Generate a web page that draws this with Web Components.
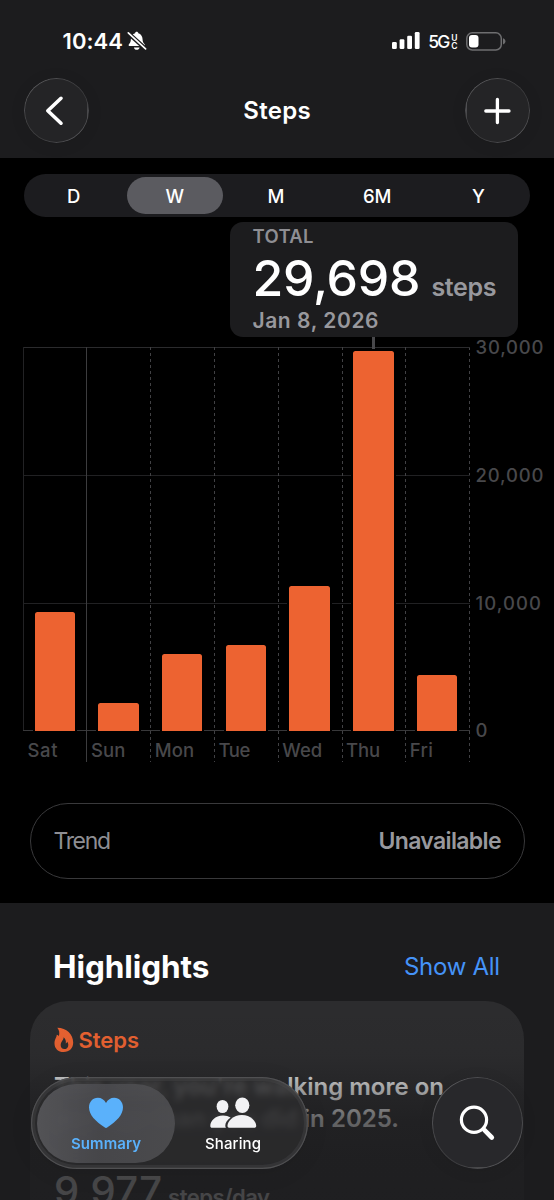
<!DOCTYPE html>
<html lang="en">
<head>
<meta charset="utf-8">
<title>Steps</title>
<style>
    html, body {
        margin: 0;
        background: #1c1c1e;
    }
    body {
        width: 554px;
        height: 1200px;
        overflow: hidden;
        color: #fff;
        font-family: Inter, "Liberation Sans", sans-serif;
    }
</style>
</head>
<body>
<steps-page></steps-page>

<script>
const define = (name, html, setup) => {
    const template = document.createElement('template');
    template.innerHTML = html;
    customElements.define(name, class extends HTMLElement {
        constructor() {
            super();
            this.root = this.attachShadow({ mode: 'open' });
            this.root.append(template.content.cloneNode(true));
        }
        connectedCallback() {
            if (setup) setup(this, this.root);
        }
    });
};

// One line of text, tracked so that its advance is `width` pixels
define('fit-text', `
<style>
    :host {
        display: block;
        flex: none;
        white-space: nowrap;
        text-align: left;
    }
    span { display: inline-block; }
</style>
<span><slot></slot></span>
`, (el, root) => {
    const span = root.querySelector('span');
    const width = Number(el.getAttribute('width'));
    const count = el.textContent.length;
    if (count < 2) return;
    span.style.letterSpacing = '0px';
    const gap = (width - span.getBoundingClientRect().width) / (count - 1);
    span.style.letterSpacing = gap + 'px';
    span.style.marginRight = -gap + 'px';
});

define('status-bar', `
<style>
    :host {
        display: flex;
        align-items: center;
        height: 78px;
        padding: 4px 48px 0 62.500px;
        box-sizing: border-box;
    }
    .time { font-size: 22px; font-weight: 600; }
    .bell { margin: 0 auto 0 4px; }
    .network {
        display: flex;
        align-items: center;
        margin: 1px 8.500px 0 8.500px;
        font-size: 17.500px;
        font-weight: 500;
    }
    .uc {
        display: grid;
        font-size: 8.500px;
        font-weight: 600;
        line-height: 8px;
        margin-left: 1px;
    }
    svg { display: block; flex: none; }
</style>
<fit-text class="time" width="60.500">10:44</fit-text>
<svg class="bell" width="20" height="20" viewBox="0 0 20 20">
    <path fill="#fff" d="M9.700.8c.9 0 1.500.6 1.600 1.400 2.700.8 4.100 3 4.200 5.600.1 2.900.7 4 1.900 5.200.9.9.5 2.100-.7 2.100H2.800c-1.200 0-1.600-1.200-.7-2.100C3.300 11.800 3.800 10.700 3.900 7.800 4 5.200 5.400 3 8.100 2.200 8.200 1.400 8.800.8 9.700.8zM6.900 16.500h5.700c-.3 1.400-1.400 2.300-2.850 2.300S7.200 17.900 6.900 16.500z"/>
    <path stroke="#1c1c1e" stroke-width="4.300" d="M.5 1.500 19 18.200"/>
    <path stroke="#fff" stroke-width="1.700" stroke-linecap="round" d="M1.300 1.900 18.600 17.900"/>
</svg>
<svg width="28" height="18" viewBox="0 0 28 18" fill="#fff">
    <rect x="0" y="10" width="4.800" height="7" rx="1.300"/>
    <rect x="7.600" y="7.300" width="4.800" height="9.700" rx="1.300"/>
    <rect x="15.200" y="3.800" width="4.800" height="13.200" rx="1.300"/>
    <rect x="22.800" y="0" width="4.800" height="17" rx="1.300"/>
</svg>
<div class="network"><fit-text width="22">5G</fit-text><div class="uc"><span>U</span><span>C</span></div></div>
<svg width="40" height="19" viewBox="0 0 40 19">
    <rect x=".8" y=".8" width="34.500" height="17.200" rx="5.500" fill="none" stroke="#6e6e70" stroke-width="1.500"/>
    <rect x="3" y="3" width="9.500" height="12.600" rx="3" fill="#fff"/>
    <path fill="#6e6e70" d="M37 6.200c1.600.5 2.400 1.700 2.400 3.100s-.8 2.600-2.400 3.100z"/>
</svg>
`);

define('glass-button', `
<style>
    :host {
        display: grid;
        place-items: center;
        width: var(--size, 65px);
        height: var(--size, 65px);
        box-sizing: border-box;
        flex: none;
        border-radius: 50%;
        position: relative;
        background: var(--fill, #242426);
        box-shadow: 0 2px 16px rgba(0, 0, 0, .08);
    }
    :host::before {
        content: "";
        position: absolute;
        inset: 0;
        padding: 1.200px;
        border-radius: 50%;
        background: linear-gradient(135deg, #606063 5%, #3e3e40 40%, #3a3a3c 60%, #5c5c5f 95%);
        mask: linear-gradient(#000 0 0) content-box exclude, linear-gradient(#000 0 0);
    }
</style>
<slot></slot>
`);

define('nav-bar', `
<style>
    :host {
        display: flex;
        justify-content: space-between;
        align-items: center;
        height: 80px;
        padding: 0 23.500px 14.500px;
        box-sizing: border-box;
        font-size: 24px;
        font-weight: 600;
    }
</style>
<glass-button>
    <svg width="65" height="65" viewBox="0 0 65 65" fill="none" stroke="#fff" stroke-width="3.600" stroke-linecap="round" stroke-linejoin="round"><path d="M37 20.300 23.800 32.800 37 45.200"/></svg>
</glass-button>
<fit-text width="67.500">Steps</fit-text>
<glass-button>
    <svg width="65" height="65" viewBox="0 0 65 65" fill="none" stroke="#fff" stroke-width="3.300" stroke-linecap="round"><path d="M20.800 33H44M32.400 21.400v23.200"/></svg>
</glass-button>
`);

define('range-picker', `
<style>
    :host {
        display: grid;
        grid-template-columns: repeat(5, 1fr);
        height: 43px;
        margin: 0 24px;
        border-radius: 22px;
        background: #1c1c1f;
        font-size: 18.500px;
        font-weight: 450;
    }
    ::slotted(*) {
        display: grid;
        place-items: center;
        margin: 3px 3.500px 3px 1.500px;
        border-radius: 19px;
    }
    ::slotted([selected]) { background: #5b5b60; font-weight: 500; }
</style>
<slot></slot>
`);

define('chart-column', `
<style>
    :host {
        display: grid;
        grid-template-rows: 383.500px 31px;
        flex: 1;
        background: repeating-linear-gradient(#414144 0 3.300px, transparent 3.300px 6px) 0 0 / 1px 100% no-repeat;
        color: #48484b;
        font-size: 18.500px;
        font-weight: 500;
    }
    :host([edge]) { background: linear-gradient(#222224, #222224) 0 0 / 1px 383px no-repeat; }
    :host([solid]) { background: linear-gradient(#3c3c3e, #3c3c3e) 0 0 / 1px 100% no-repeat; }
    .plot {
        display: flex;
        align-items: flex-end;
        padding-left: 11.700px;
    }
    .bar {
        width: 40.500px;
        border-radius: 2.500px 2.500px 0 0;
        background: #ed6331;
        box-shadow: -2px 0 #000, 2px 0 #000;
    }
    .label { padding: 7px 0 0 4.500px; line-height: 24px; }
</style>
<div class="plot"><div class="bar"></div></div>
<div class="label"><slot></slot></div>
`, (el, root) => {
    // 30,000 steps fill the whole plot
    root.querySelector('.bar').style.height = el.getAttribute('value') / 30000 * 383.5 + 'px';
});

define('steps-chart', `
<style>
    :host {
        display: flex;
        margin: 130px 0 0 23px;
        position: relative;
    }
    .plot {
        display: flex;
        width: 446.500px;
        height: 414.500px;
        background:
            linear-gradient(#2b2b2d, #2b2b2d) 0 0 / 100% 1px no-repeat,
            linear-gradient(#212123, #212123) 0 128px / 100% 1px no-repeat,
            linear-gradient(#212123, #212123) 0 256px / 100% 1px no-repeat,
            linear-gradient(#38383a, #38383a) 0 383px / 100% 1px no-repeat,
            repeating-linear-gradient(#414144 0 3.300px, transparent 3.300px 6px) 100% 0 / 1px 100% no-repeat;
    }
    chart-column { margin-left: -.4px; margin-right: .4px; }
    chart-column[edge] { margin-left: 0; margin-right: 0; }
    .axis {
        display: flex;
        flex-direction: column;
        justify-content: space-between;
        height: 407.500px;
        margin: -12px 0 0 6px;
        color: #48484b;
        font-size: 18.500px;
        font-weight: 500;
        line-height: 24px;
    }
    .callout {
        position: absolute;
        left: 207px;
        top: -125px;
        width: 288px;
        height: 115px;
        box-sizing: border-box;
        padding: 3px 0 0 22.500px;
        border-radius: 13px;
        background: #1c1c1e;
        color: #98989d;
    }
    .callout::after {
        content: "";
        position: absolute;
        left: 142px;
        top: 115px;
        width: 3px;
        height: 12px;
        background: #48484b;
    }
    .total { font-size: 18.500px; font-weight: 600; line-height: 23px; color: #8e8e93; }
    .value { display: flex; align-items: baseline; gap: 11px; height: 60px; line-height: 60px; }
    .number { color: #fff; font-size: 50px; font-weight: 500; }
    .unit { font-size: 25px; font-weight: 600; }
    .date { font-size: 21px; font-weight: 600; line-height: 26px; }
</style>
<div class="plot">
    <chart-column edge value="9300"><fit-text width="30">Sat</fit-text></chart-column>
    <chart-column solid value="2130"><fit-text width="34.500">Sun</fit-text></chart-column>
    <chart-column value="5950"><fit-text width="39.500">Mon</fit-text></chart-column>
    <chart-column value="6690"><fit-text width="32">Tue</fit-text></chart-column>
    <chart-column value="11320"><fit-text width="40">Wed</fit-text></chart-column>
    <chart-column value="29698"><fit-text width="34">Thu</fit-text></chart-column>
    <chart-column value="4320"><fit-text width="23">Fri</fit-text></chart-column>
</div>
<div class="axis">
    <fit-text width="68">30,000</fit-text>
    <fit-text width="68">20,000</fit-text>
    <fit-text width="65.500">10,000</fit-text>
    <fit-text>0</fit-text>
</div>
<div class="callout">
    <fit-text class="total" width="61">TOTAL</fit-text>
    <div class="value"><fit-text class="number" width="168">29,698</fit-text><fit-text class="unit" width="65">steps</fit-text></div>
    <fit-text class="date" width="126">Jan 8, 2026</fit-text>
</div>
`);

define('trend-row', `
<style>
    :host {
        display: flex;
        justify-content: space-between;
        align-items: center;
        height: 76.500px;
        box-sizing: border-box;
        margin: 41px 29.500px 0;
        padding: 0 22px 0 23px;
        border: 1.500px solid #39393b;
        border-radius: 38px;
        color: #8e8e93;
        font-size: 23px;
    }
    ::slotted([slot="state"]) { font-weight: 600; color: #98989d; }
</style>
<slot></slot>
<slot name="state"></slot>
`);

define('highlight-card', `
<style>
    :host {
        display: block;
        height: 280px;
        box-sizing: border-box;
        margin: 0 30px;
        padding: 24px 24px 0;
        border-radius: 38px;
        background: #2c2c2e;
    }
    .kind {
        display: flex;
        align-items: center;
        gap: 4.500px;
        height: 30px;
        color: #ed6331;
        font-size: 22px;
        font-weight: 600;
    }
    .text {
        padding-top: 15.500px;
        font-size: 24px;
        font-weight: 600;
        line-height: 32.500px;
    }
    .average {
        display: flex;
        align-items: baseline;
        gap: 6px;
        padding-top: 30px;
        font-size: 40px;
        font-weight: 500;
        line-height: 50px;
    }
    .unit { font-size: 22px; font-weight: 600; }
</style>
<div class="kind">
    <svg width="20" height="26" viewBox="0 0 20 26"><path fill="#ed6331" fill-rule="evenodd" d="M3.300.8C12.500.9 19.200 7.300 19.200 15.500c0 5.700-3.900 9.500-9.500 9.500C4.100 25 .5 21.300.5 16.400c0-4 1.900-5.300 2.300-8.600 1 .1 1.700.7 2 1.500C5.800 6.400 5.400 3.300 3.300.8zM9.600 10.300c.3 2.700-2.900 4.300-2.900 7.900 0 2.300 1.400 3.900 3.600 3.900 2.400 0 4-1.700 4-4.200 0-1.200-.4-2.400-1.100-3.200-.2.900-.7 1.500-1.400 1.700.4-2.400-.3-4.700-2.200-6.100z"/></svg>
    <fit-text width="60.500">Steps</fit-text>
</div>
<div class="text">
    <fit-text width="390">This year, you're walking more on</fit-text>
    <fit-text width="345">average than you did in 2025.</fit-text>
</div>
<div class="average"><fit-text width="108">9,977</fit-text><fit-text class="unit" width="102">steps/day</fit-text></div>
`);

define('tab-item', `
<style>
    :host {
        display: flex;
        flex-direction: column;
        align-items: center;
        width: 138px;
        height: 79px;
        box-sizing: border-box;
        padding-top: 11px;
        border-radius: 40px;
        font-size: 15px;
        font-weight: 500;
        line-height: 22px;
    }
    :host([selected]) {
        color: #5ab1fb;
        font-weight: 600;
        background: linear-gradient(90deg, rgba(97, 97, 101, .75), rgba(78, 78, 82, .8) 45%, rgba(83, 83, 86, .8));
        backdrop-filter: blur(5px);
    }
    ::slotted(svg) { margin-bottom: 4.500px; }
</style>
<slot name="icon"></slot>
<slot></slot>
`);

define('tab-bar', `
<style>
    :host {
        display: flex;
        justify-content: space-between;
        align-items: center;
        position: absolute;
        left: 31px;
        right: 31px;
        top: 1077px;
    }
    .tabs {
        display: flex;
        width: 277px;
        height: 91.500px;
        box-sizing: border-box;
        padding: 6.500px 0 0 6px;
        border-radius: 46px;
        position: relative;
    }
    .tabs::before {
        content: "";
        position: absolute;
        inset: 0;
        border-radius: 46px;
        background: rgba(44, 44, 46, .74);
        backdrop-filter: blur(3.500px);
        box-shadow: inset 0 0 0 1.200px #505052, inset 0 0 0 4px rgba(80, 80, 83, .3), 0 4px 24px rgba(0, 0, 0, .08);
    }
    tab-item { position: relative; }
    tab-item + tab-item { margin-left: -11px; }
    glass-button { --size: 91.500px; --fill: #28282b; }
</style>
<div class="tabs">
    <tab-item selected>
        <svg slot="icon" width="36" height="34" viewBox="0 0 36 34"><path fill="#5ab1fb" d="M18 33c-.5 0-1-.3-1.500-.7C7.600 26.300 1 20 1 12.300 1 6.800 4.800 2.700 9.800 2.700c3.600 0 6.600 2 8.200 5.200 1.600-3.200 4.600-5.200 8.200-5.200 5 0 8.800 4.100 8.800 9.600 0 7.700-6.600 14-15.500 20-.5.4-1 .7-1.500.7z"/></svg>
        <fit-text width="70">Summary</fit-text>
    </tab-item>
    <tab-item>
        <svg slot="icon" width="48" height="34" viewBox="0 0 48 34" fill="#f2f2f4">
            <ellipse cx="13.500" cy="11.500" rx="5.900" ry="6.600"/>
            <ellipse cx="33.300" cy="10.300" rx="7.100" ry="7.800"/>
            <path d="M3.300 32.800c-1.500 0-2-.8-2-2.100 0-4.400 4.800-10.300 12.700-10.300 3 0 5.500.8 7.600 2.200-3.600 2.500-5.300 5.400-5.300 8 0 .9.200 1.600.6 2.200z"/>
            <path d="M21 32.800c-1.900 0-2.500-.7-2.500-2.100 0-4.300 5.600-10.700 14.400-10.700s14.300 6.400 14.300 10.700c0 1.400-.6 2.100-2.500 2.100z"/>
        </svg>
        <fit-text width="56">Sharing</fit-text>
    </tab-item>
</div>
<glass-button>
    <svg width="91" height="91" viewBox="0 0 91 91" fill="none" stroke="#fff" stroke-width="3.200" stroke-linecap="round"><circle cx="42" cy="42.700" r="12.600"/><path stroke-width="4.600" d="m52.500 53.200 7.300 7.300"/></svg>
</glass-button>
`);

define('steps-page', `
<style>
    :host {
        display: block;
        position: relative;
        height: 1200px;
        overflow: hidden;
    }
    header { height: 158px; }
    .summary {
        height: 745px;
        box-sizing: border-box;
        padding-top: 16px;
        background: #000;
    }
    .heading {
        display: flex;
        justify-content: space-between;
        align-items: center;
        height: 98px;
        box-sizing: border-box;
        padding: 29px 54px 0 53px;
    }
    h2 { margin: 0; font-size: 31.500px; font-weight: 700; }
    .link { color: #4593f8; font-size: 24px; }
    /* content fades out towards the tab bar */
    .fade {
        position: absolute;
        inset: 1010px 0 0;
        background: linear-gradient(rgba(28, 28, 30, 0), rgba(28, 28, 30, .08) 24%, rgba(28, 28, 30, .38) 40%, rgba(28, 28, 30, .68) 58%, rgba(28, 28, 30, .8) 78%, rgba(28, 28, 30, .82));
    }
</style>
<header>
    <status-bar></status-bar>
    <nav-bar></nav-bar>
</header>
<div class="summary">
    <range-picker><span>D</span><span selected>W</span><span>M</span><span>6M</span><span>Y</span></range-picker>
    <steps-chart></steps-chart>
    <trend-row><fit-text width="57.500">Trend</fit-text><fit-text slot="state" width="123">Unavailable</fit-text></trend-row>
</div>
<div class="heading"><h2><fit-text width="156.500">Highlights</fit-text></h2><fit-text class="link" width="96">Show All</fit-text></div>
<highlight-card></highlight-card>
<div class="fade"></div>
<tab-bar></tab-bar>
`);
</script>
</body>
</html>
